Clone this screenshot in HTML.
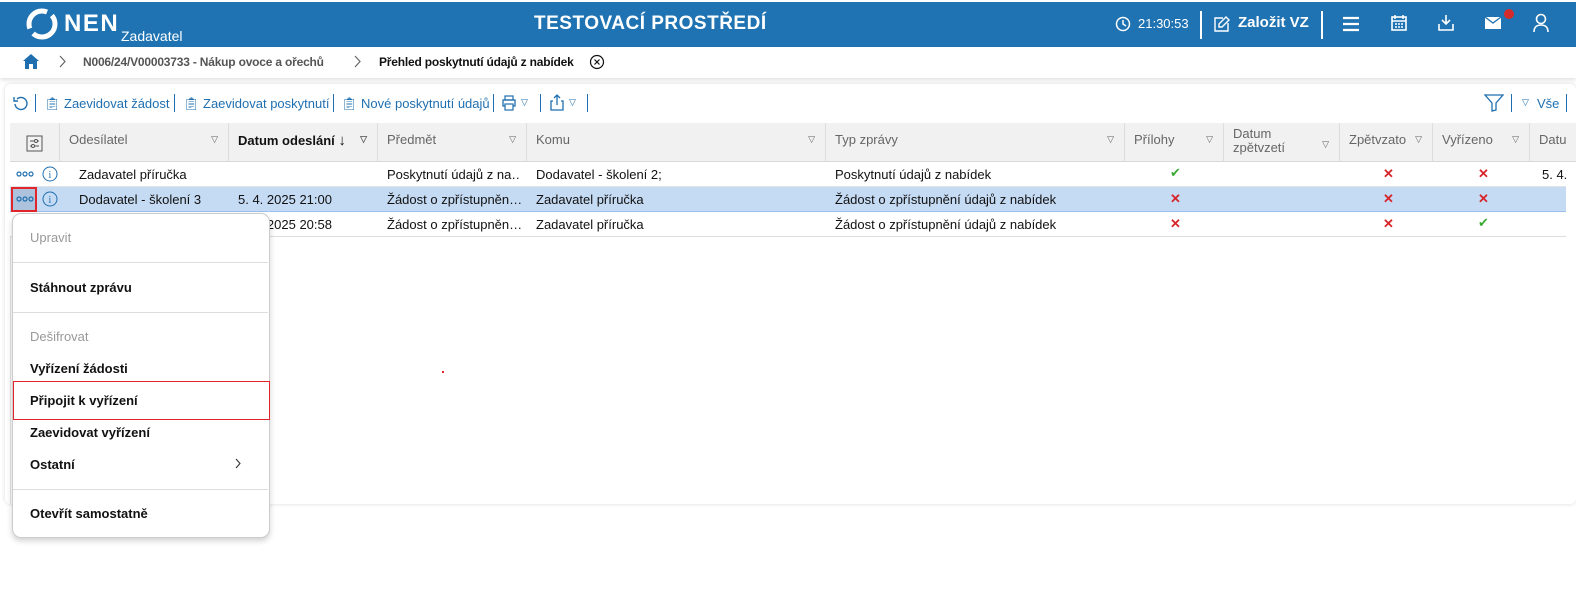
<!DOCTYPE html>
<html><head><meta charset="utf-8"><style>
*{box-sizing:border-box;margin:0;padding:0}
body{width:1576px;height:600px;background:#fff;font-family:"Liberation Sans",sans-serif;position:relative;overflow:hidden;font-size:13px;color:#111}
.a{position:absolute;white-space:nowrap}
#hdr{left:0;top:0;width:1576px;height:45px;background:#1f73b2;top:2px}
.w{color:#fff}
.th{position:absolute;top:123px;height:39px;background:#f1f1f1;border-right:1px solid #ddd;border-bottom:1px solid #d8d8d8;color:#666;font-size:13px;padding:9px 0 0 9px}
.th .f{position:absolute;right:10px;top:11px;font-size:9px;color:#666}
.c{position:absolute;font-size:13px;white-space:nowrap;overflow:hidden}
.x{color:#d7262b;font-weight:bold;font-size:13px}
.ok{color:#3aaa35;font-size:13px}
.mi{position:absolute;left:30px;font-size:13px;font-weight:bold;color:#111}
.sep{position:absolute;left:13px;width:255px;height:1px;background:#ddd}
.tb{color:#1f6fb0;font-size:13px}
.vs{position:absolute;top:94px;width:1px;height:18px;background:#1f6fb0}
</style></head><body>
<div id="hdr" class="a"></div>
<svg class="a" style="left:25px;top:8px" width="34" height="32" viewBox="0 0 34 32"><circle cx="17" cy="16" r="13" fill="none" stroke="#fff" stroke-width="5" stroke-dasharray="30 6"/></svg>
<div class="a w" style="left:64px;top:10px;font-size:24px;font-weight:bold;letter-spacing:1.5px">NEN</div>
<div class="a w" style="left:121px;top:28px;font-size:14px">Zadavatel</div>
<div class="a w" style="left:534px;top:13px;font-size:19px;font-weight:bold;letter-spacing:0.5px">TESTOVACÍ PROSTŘEDÍ</div>
<svg class="a" style="left:1115px;top:16px" width="16" height="16"><circle cx="8" cy="8" r="6.5" fill="none" stroke="#fff" stroke-width="1.5"/><path d="M8 4v4l3 2" stroke="#fff" stroke-width="1.5" fill="none"/></svg>
<div class="a w" style="left:1138px;top:16px;font-size:13px">21:30:53</div>
<div class="a" style="left:1200px;top:11px;width:2px;height:28px;background:#fff"></div>
<svg class="a" style="left:1213px;top:15px" width="18" height="18"><path d="M13 2l3 3-7 7H6V9z M10 3H2v13h13V8" stroke="#fff" stroke-width="1.4" fill="none"/></svg>
<div class="a w" style="left:1238px;top:14px;font-size:15px;font-weight:bold">Založit VZ</div>
<div class="a" style="left:1321px;top:11px;width:2px;height:28px;background:#fff"></div>
<svg class="a" style="left:1342px;top:16px" width="18" height="16"><path d="M1 2h16M1 8h16M1 14h16" stroke="#fff" stroke-width="2.2"/></svg>
<svg class="a" style="left:1391px;top:14px" width="16" height="18"><rect x="1" y="3" width="14" height="13" fill="none" stroke="#fff" stroke-width="1.6"/><path d="M4 1v4M12 1v4M1 7h14M4 10h2M7 10h2M10 10h2M4 13h2M7 13h2M10 13h2" stroke="#fff" stroke-width="1.5"/></svg>
<svg class="a" style="left:1437px;top:14px" width="18" height="18"><path d="M9 1v9M5 6l4 4 4-4M2 10v6h14v-6" stroke="#fff" stroke-width="1.6" fill="none"/></svg>
<svg class="a" style="left:1484px;top:16px" width="18" height="14"><rect x="1" y="1" width="16" height="12" fill="#fff"/><path d="M1 1l8 6 8-6" stroke="#1f73b2" stroke-width="1.3" fill="none"/></svg>
<div class="a" style="left:1504px;top:9px;width:10px;height:10px;border-radius:50%;background:#d42a2a"></div>
<svg class="a" style="left:1533px;top:13px" width="16" height="20"><circle cx="8" cy="6" r="4.5" fill="none" stroke="#fff" stroke-width="1.6"/><path d="M1 19c0-5 3-7 7-7s7 2 7 7" stroke="#fff" stroke-width="1.6" fill="none"/></svg>

<div class="a" style="left:0;top:47px;width:1576px;height:31px;background:#fff;box-shadow:0 2px 4px rgba(0,0,0,.12)"></div>
<svg class="a" style="left:22px;top:53px" width="18" height="17"><path d="M9 1L1 8h2v8h4v-5h4v5h4V8h2z" fill="#1f6fb0"/></svg>
<svg class="a" style="left:59px;top:55px" width="8" height="13"><path d="M1 1l5 5.5L1 12" stroke="#666" stroke-width="1.2" fill="none"/></svg>
<div class="a" style="left:83px;top:55px;font-size:12px;color:#555;font-weight:bold;letter-spacing:-0.2px">N006/24/V00003733 - Nákup ovoce a ořechů</div>
<svg class="a" style="left:354px;top:55px" width="8" height="13"><path d="M1 1l5 5.5L1 12" stroke="#666" stroke-width="1.2" fill="none"/></svg>
<div class="a" style="left:379px;top:55px;font-size:12px;font-weight:bold;letter-spacing:-0.2px">Přehled poskytnutí údajů z nabídek</div>
<svg class="a" style="left:589px;top:54px" width="16" height="16"><circle cx="8" cy="8" r="6.5" fill="none" stroke="#111" stroke-width="1.2"/><path d="M5.5 5.5l5 5M10.5 5.5l-5 5" stroke="#111" stroke-width="1.2"/></svg>

<div class="a" style="left:5px;top:84px;width:1571px;height:420px;background:#fff;border-radius:6px;box-shadow:0 0 4px rgba(0,0,0,.15)"></div>
<svg class="a" style="left:13px;top:95px" width="16" height="16"><path d="M4 4a6 6 0 1 1-2 5" stroke="#1f6fb0" stroke-width="1.4" fill="none"/><path d="M1 2v4h4" stroke="#1f6fb0" stroke-width="1.4" fill="none"/></svg>
<div class="vs" style="left:35px"></div>
<div class="a tb" style="left:44px;top:96px">📋︎</div>
<div class="a tb" style="left:64px;top:96px">Zaevidovat žádost</div>
<div class="vs" style="left:174px"></div>
<div class="a tb" style="left:183px;top:96px">📋︎</div>
<div class="a tb" style="left:203px;top:96px">Zaevidovat poskytnutí</div>
<div class="vs" style="left:333px"></div>
<div class="a tb" style="left:341px;top:96px">📋︎</div>
<div class="a tb" style="left:361px;top:96px">Nové poskytnutí údajů</div>
<div class="vs" style="left:493px"></div>
<svg class="a" style="left:501px;top:95px" width="16" height="16"><rect x="2" y="5" width="12" height="6" fill="none" stroke="#1f6fb0" stroke-width="1.3"/><rect x="4" y="1" width="8" height="4" fill="none" stroke="#1f6fb0" stroke-width="1.2"/><rect x="4" y="9" width="8" height="6" fill="#fff" stroke="#1f6fb0" stroke-width="1.2"/></svg>
<div class="a tb" style="left:521px;top:97px;font-size:9px">▽</div>
<div class="vs" style="left:540px"></div>
<svg class="a" style="left:549px;top:94px" width="16" height="18"><path d="M8 1v10M5 4l3-3 3 3M4 7H2v9h12V7h-2" stroke="#1f6fb0" stroke-width="1.3" fill="none"/></svg>
<div class="a tb" style="left:569px;top:97px;font-size:9px">▽</div>
<div class="vs" style="left:587px"></div>
<svg class="a" style="left:1484px;top:94px" width="20" height="18"><path d="M1 1h18l-7 8v7l-4 1V9z" stroke="#1f6fb0" stroke-width="1.3" fill="none"/></svg>
<div class="vs" style="left:1511px"></div>
<div class="a tb" style="left:1522px;top:97px;font-size:9px">▽</div>
<div class="a tb" style="left:1537px;top:96px">Vše</div>
<div class="vs" style="left:1566px"></div>

<div class="th" style="left:10px;width:50px"></div>
<svg class="a" style="left:26px;top:135px" width="17" height="17"><rect x="1" y="1" width="15" height="15" fill="none" stroke="#555" stroke-width="1"/><path d="M4 6h9M4 11h9" stroke="#555"/><circle cx="10" cy="6" r="1.5" fill="#fff" stroke="#555"/><circle cx="7" cy="11" r="1.5" fill="#fff" stroke="#555"/></svg>
<div class="th" style="left:60px;width:169px">Odesílatel<span class="f">▽</span></div>
<div class="th" style="left:229px;width:149px;color:#111;font-weight:bold">Datum odeslání <span style="font-weight:normal;font-size:15px">↓</span><span class="f">▽</span></div>
<div class="th" style="left:378px;width:149px">Předmět<span class="f">▽</span></div>
<div class="th" style="left:527px;width:299px">Komu<span class="f">▽</span></div>
<div class="th" style="left:826px;width:299px">Typ zprávy<span class="f">▽</span></div>
<div class="th" style="left:1125px;width:99px">Přílohy<span class="f">▽</span></div>
<div class="th" style="left:1224px;width:116px;padding-top:4px;line-height:14px">Datum<br>zpětvzetí<span class="f" style="top:14px">▽</span></div>
<div class="th" style="left:1340px;width:93px">Zpětvzato<span class="f">▽</span></div>
<div class="th" style="left:1433px;width:97px">Vyřízeno<span class="f">▽</span></div>
<div class="th" style="left:1530px;width:46px;border-right:none">Datu</div>

<div class="a" style="left:10px;top:162px;width:1556px;height:25px;border-bottom:1px solid #e3e3e3"></div>
<div class="a" style="left:10px;top:187px;width:1556px;height:25px;background:#c5daf3;border-bottom:1px solid #9cc1ea"></div>
<div class="a" style="left:10px;top:212px;width:1556px;height:25px;border-bottom:1px solid #ddd"></div>
<div class="a" style="left:10px;top:237px;width:1px;height:267px;background:#e3e3e3"></div>

<svg class="a" style="left:16px;top:171px" width="20" height="6"><circle cx="3" cy="3" r="2" fill="none" stroke="#1f6fb0" stroke-width="1.2"/><circle cx="9" cy="3" r="2" fill="none" stroke="#1f6fb0" stroke-width="1.2"/><circle cx="15" cy="3" r="2" fill="none" stroke="#1f6fb0" stroke-width="1.2"/></svg>
<div class="a" style="left:11px;top:187px;width:26px;height:25px;border:2px solid #e0262b;background:rgba(130,150,180,.35)"></div>
<svg class="a" style="left:16px;top:196px" width="20" height="6"><circle cx="3" cy="3" r="2" fill="none" stroke="#1f6fb0" stroke-width="1.2"/><circle cx="9" cy="3" r="2" fill="none" stroke="#1f6fb0" stroke-width="1.2"/><circle cx="15" cy="3" r="2" fill="none" stroke="#1f6fb0" stroke-width="1.2"/></svg>
<svg class="a" style="left:42px;top:166px" width="16" height="16"><circle cx="8" cy="8" r="7" fill="none" stroke="#1f6fb0"/><text x="6.5" y="12" font-size="10" fill="#1f6fb0" font-family="Liberation Serif">i</text></svg>
<svg class="a" style="left:42px;top:191px" width="16" height="16"><circle cx="8" cy="8" r="7" fill="none" stroke="#1f6fb0"/><text x="6.5" y="12" font-size="10" fill="#1f6fb0" font-family="Liberation Serif">i</text></svg>

<div class="c" style="left:79px;top:167px">Zadavatel příručka</div>
<div class="c" style="left:387px;top:167px;width:134px">Poskytnutí údajů z na…</div>
<div class="c" style="left:536px;top:167px">Dodavatel - školení 2;</div>
<div class="c" style="left:835px;top:167px">Poskytnutí údajů z nabídek</div>
<div class="c ok" style="left:1170px;top:165px">✔</div>
<div class="c x" style="left:1383px;top:166px">✕</div>
<div class="c x" style="left:1478px;top:166px">✕</div>
<div class="c" style="left:1542px;top:167px">5. 4.</div>

<div class="c" style="left:79px;top:192px">Dodavatel - školení 3</div>
<div class="c" style="left:238px;top:192px">5. 4. 2025 21:00</div>
<div class="c" style="left:387px;top:192px;width:134px">Žádost o zpřístupněn…</div>
<div class="c" style="left:536px;top:192px">Zadavatel příručka</div>
<div class="c" style="left:835px;top:192px">Žádost o zpřístupnění údajů z nabídek</div>
<div class="c x" style="left:1170px;top:191px">✕</div>
<div class="c x" style="left:1383px;top:191px">✕</div>
<div class="c x" style="left:1478px;top:191px">✕</div>

<div class="c" style="left:238px;top:217px">5. 4. 2025 20:58</div>
<div class="c" style="left:387px;top:217px;width:134px">Žádost o zpřístupněn…</div>
<div class="c" style="left:536px;top:217px">Zadavatel příručka</div>
<div class="c" style="left:835px;top:217px">Žádost o zpřístupnění údajů z nabídek</div>
<div class="c x" style="left:1170px;top:216px">✕</div>
<div class="c x" style="left:1383px;top:216px">✕</div>
<div class="c ok" style="left:1478px;top:215px">✔</div>

<div class="a" style="left:442px;top:371px;width:2px;height:2px;background:#e0262b"></div>

<div class="a" style="left:12px;top:213px;width:258px;height:325px;background:#fff;border:1px solid #ccc;border-radius:9px;box-shadow:0 3px 6px rgba(0,0,0,.18)"></div>
<div class="mi" style="top:230px;color:#999;font-weight:normal">Upravit</div>
<div class="sep" style="top:262px"></div>
<div class="mi" style="top:280px">Stáhnout zprávu</div>
<div class="sep" style="top:312px"></div>
<div class="mi" style="top:329px;color:#999;font-weight:normal">Dešifrovat</div>
<div class="mi" style="top:361px">Vyřízení žádosti</div>
<div class="a" style="left:13px;top:381px;width:257px;height:39px;border:1px solid #e0262b"></div>
<div class="mi" style="top:393px">Připojit k vyřízení</div>
<div class="mi" style="top:425px">Zaevidovat vyřízení</div>
<div class="mi" style="top:457px">Ostatní</div>
<svg class="a" style="left:235px;top:458px" width="7" height="11"><path d="M1 1l4 4.5L1 10" stroke="#333" stroke-width="1.1" fill="none"/></svg>
<div class="sep" style="top:489px"></div>
<div class="mi" style="top:506px">Otevřít samostatně</div>
</body></html>
